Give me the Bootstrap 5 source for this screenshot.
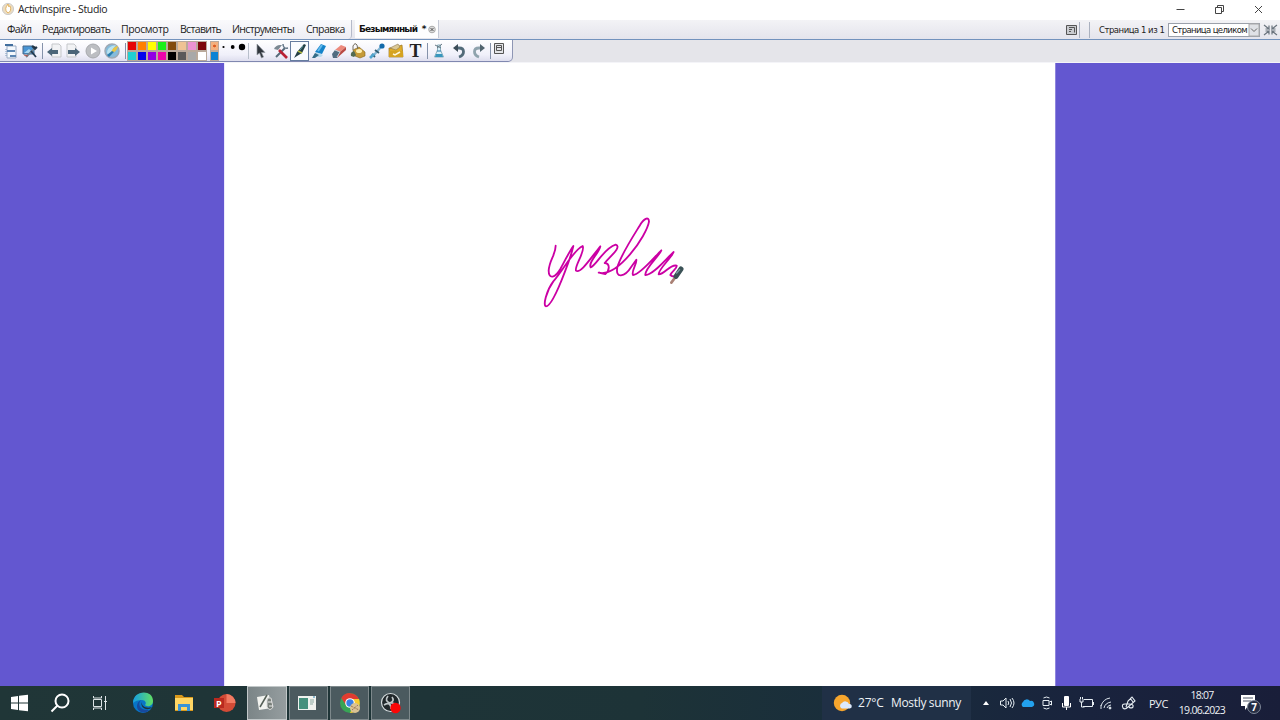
<!DOCTYPE html>
<html lang="ru">
<head>
<meta charset="utf-8">
<title>ActivInspire - Studio</title>
<link href="https://cdn.jsdelivr.net/npm/bootstrap@5.3.0/dist/css/bootstrap.min.css" rel="stylesheet">
<style>
body{width:1280px;height:720px;overflow:hidden;font-family:"Open Sans","Noto Sans",sans-serif;font-size:10.5px;line-height:1;color:#222}
svg{display:block;flex:none;overflow:visible}
.titlebar{height:20px;background:#fff}
.titlebar .t{letter-spacing:-.38px;padding-bottom:1px}
.menurow{height:19px;background:linear-gradient(#f3f3f6,#e4e4ec)}
.menupane{width:352px;background:linear-gradient(#fafafc,#ededf4);border-right:1px solid #b5bac9;border-radius:0 0 4px 0;letter-spacing:-.66px}
.menupane span,.t{white-space:nowrap;flex:none}
.doctab{width:84px;height:18px;margin-left:3px;background:#fdfdfe;border-right:1px solid #c4c8d4;font:bold 9px "DejaVu Sans",sans-serif;color:#111;letter-spacing:-.7px}
.toolrow{height:24px;background:#e5e5ea;border-top:1px solid #7292bd;border-bottom:1px solid #f4f4f8}
.toolpane{width:513px;height:22px;background:linear-gradient(#fff,#f0f0fa 70%,#dedeee);border-right:1px solid #8e96b4;border-bottom:1px solid #8088b0;border-radius:0 0 5px 0}
.cell{flex:none;display:flex;justify-content:center;align-items:center;height:21px}
.sep{flex:none;width:1px;height:16px;background:#8592aa}
.palette{display:grid;grid-template-columns:repeat(8,10px);grid-auto-rows:10px;width:80px}
.palette i,.swatch{border:1px solid #b9a99b;width:10px;height:10px;display:block}
.swatch{width:9px}
.pagelabel{font:8.5px "DejaVu Sans",sans-serif;letter-spacing:-.48px;width:69px}
.zoombox{width:92px;height:14px;background:#fff;border:1px solid #9ba0aa;padding-left:3px;font:8.5px "DejaVu Sans",sans-serif;letter-spacing:-.62px}
.workspace{height:623px;background:#6357d0}
.sheet{width:832px;margin-left:224px;background:#fff;border-left:1px solid #ebe9ff;border-right:1px solid #8f86dd}
.ink{position:absolute;left:305px;top:142px}
.taskbar{height:34px;background:linear-gradient(90deg,#203637,#1d3337 50%,#192d3c 68%,#19233d 85%,#191e39);color:#eef2f5}
.task{width:39px;height:34px;background:#4b5a5f;border:1px solid #7d888b;flex:none}
.task.current{background:linear-gradient(90deg,#7b8587,#959d9f);border-color:#c2c8c9;width:40px}
.weather{width:149px;height:34px;background:#203046;font-size:12px}
.clock{font-size:10.5px;line-height:15px;width:60px;letter-spacing:-.72px}
</style>
</head>
<body class="d-flex flex-column bg-white">
<header class="titlebar d-flex align-items-center flex-shrink-0">
  <svg width="18" height="20"><circle cx="8" cy="9" r="5.600" fill="#ecdcc0" stroke="#ccc"/><path d="M7 12Q4 9 8 4Q8 8 10 6Q12 11 8 13Z" fill="#fff" stroke="#dda747" stroke-width=".8"/></svg>
  <span class="t">ActivInspire - Studio</span>
  <svg class="ms-auto" width="106" height="20" fill="none" stroke="#444"><path d="M2.500 9.500h8M41.500 7.500h6v6h-6zM43.500 7v-1.500h6v6h-2M81 6l7 7M88 6l-7 7"/></svg>
</header>

<nav class="menurow d-flex flex-shrink-0">
  <div class="menupane d-flex align-items-center flex-shrink-0">
    <span style="width:35px;margin-left:7px">Файл</span><span style="width:79px">Редактировать</span><span style="width:59px;letter-spacing:-.4px">Просмотр</span><span style="width:52px">Вставить</span><span style="width:74px">Инструменты</span><span style="letter-spacing:-.55px">Справка</span>
  </div>
  <div class="doctab d-flex align-items-center" style="padding-left:4px"><span class="t" style="width:68px;letter-spacing:-.82px">Безымянный&nbsp; *</span>
    <svg width="9" height="9"><circle cx="5" cy="4.500" r="3.300" fill="#ddd" stroke="#aaa"/><path d="M3.500 3l3 3M6.500 3l-3 3" stroke="#555"/></svg></div>
  <div class="d-flex align-items-center ms-auto">
    <svg width="12" height="12" fill="none" stroke="#555"><path fill="#c9cbcf" d="M.5 1.500h10v9H.5z"/><path d="M3 3.500h5.500v5M3 5.500h3M3 7.500h2"/></svg>
    <i class="sep" style="margin-left:1px;background:#aab1bf"></i><i class="sep" style="margin:0 9px;background:#aab1bf"></i>
    <span class="t pagelabel">Страница 1 из 1</span>
    <div class="zoombox d-flex align-items-center justify-content-between"><span class="t">Страница целиком</span>
      <svg width="10" height="12"><path d="M0 0h10v12H0z" fill="#dfe1e6" stroke="#aaa"/><path d="M2 4.500l3 3 3-3" fill="none" stroke="#666"/></svg></div>
    <svg style="margin-left:4px;margin-right:2px" width="14" height="14" fill="none" stroke="#69737d" stroke-width="1.200"><path d="M0 2l5 4V2.500M5 6H1.500M13 2L8 6V2.500M8 6h3.500M0 12l5-4v3.500M5 8H1.500M13 12L8 8v3.500M8 8h3.500"/></svg>
  </div>
</nav>

<div class="toolrow flex-shrink-0">
 <div class="toolpane d-flex align-items-center">
  <div class="cell" style="width:21px"><svg width="16" height="16"><path d="M4 3h9v12H4z" fill="#f4f8fd" stroke="#9aabc3"/><path d="M2 1h8v2H2z" fill="#426f9e"/><path d="M4 7h8v2H4zM7 12h6v2H7z" fill="#5c85b3"/><path d="M3 6v8" stroke="#7996ba" stroke-dasharray="1"/></svg></div>
  <div class="cell" style="width:18px"><svg width="16" height="16"><path d="M1 3h11v8H1z" fill="#4995d4" stroke="#47698a"/><path d="M2 10l5-4 4 4" fill="#a9d8f3"/><path d="M4 14l9-9" stroke="#718391" stroke-width="2"/><path d="M9 8l5 6M10 3l3 3 2-2" stroke="#24394d" stroke-width="1.800"/><path d="M2 12l4 1" stroke="#b65246"/></svg></div>
  <i class="sep" style="margin:0 2px 0 3px"></i>
  <div class="cell" style="width:18px"><svg width="16" height="16"><path d="M6 1h7l2 2v11H6z" fill="#f1f2f4" stroke="#c5c7ca"/><path d="M1 9l5-4v2h6v4H6v2z" fill="#4b6578"/></svg></div>
  <div class="cell" style="width:20px"><svg width="16" height="16"><path d="M2 1h7l2 2v11H2z" fill="#f1f2f4" stroke="#c5c7ca"/><path d="M15 9l-5-4v2H3v4h7v2z" fill="#4b6578"/></svg></div>
  <div class="cell" style="width:19px"><svg width="16" height="16"><circle cx="8" cy="8" r="7" fill="#bcbec2" stroke="#a7a9ad"/><path d="M6 4.500l6 3.500-6 3.500z" fill="#fff"/></svg></div>
  <div class="cell" style="width:19px"><svg width="16" height="16"><circle cx="8" cy="8" r="7" fill="#84bbdb" stroke="#9ea9b4" stroke-width="1.500"/><path d="M3 10Q3 5 8 3l4-1-3 4 2 2-6 5z" fill="#b9e2f0"/><path d="M7 10Q8 4 14 3Q13 9 7 10Z" fill="#eac646"/><path d="M3 12l5-4 2 1-5 5z" fill="#287daf"/></svg></div>
  <i class="sep" style="margin:0 0 0 4px"></i>
  <div class="palette" style="margin-left:.5px">
   <i style="background:#e60404"></i><i style="background:#ff8000"></i><i style="background:#ffff00"></i><i style="background:#19ee19"></i><i style="background:#824b0d"></i><i style="background:#efc394"></i><i style="background:#eb93d2"></i><i style="background:#7d070c"></i>
   <i style="background:#20d0d2"></i><i style="background:#0404eb"></i><i style="background:#9100e5"></i><i style="background:#ed04ab"></i><i style="background:#000"></i><i style="background:#5a5a5a"></i><i style="background:#a9a9a9"></i><i style="background:#fff"></i>
  </div>
  <div style="margin-left:3px"><i class="swatch" style="background:radial-gradient(circle,#dd5a20 20%,#f4b07e 32%)"></i><i class="swatch" style="background:#0a82d4"></i></div>
  <svg width="30" height="20"><circle cx="4.500" cy="6" r="1.100"/><circle cx="13.700" cy="6" r="1.900"/><circle cx="23" cy="6" r="3.200"/></svg>
  <i class="sep" style="margin-right:1px;background:#b8bfcb;margin-left:-.5px"></i>
  <div class="cell" style="width:22px"><svg width="16" height="16"><path d="M4 1v11l2.500-2 2 5 2-1-2-4.500H12z" fill="#30363d" stroke="#9298a0" stroke-width=".7"/></svg></div>
  <div class="cell" style="width:18px"><svg width="16" height="16" fill="none"><path d="M3 14L12 5" stroke="#576b7b" stroke-width="2"/><path d="M10 1q0 5 5 4" stroke="#66798a" stroke-width="1.500"/><path d="M6 7l8 8" stroke="#b92235" stroke-width="2.600"/><path d="M1 6q2-4 6-4h2L5 7z" fill="#7c8993"/></svg></div>
  <div class="cell" style="width:19px;height:20px;background:#fafbff;border:1px solid #667ca0"><svg width="16" height="16"><path d="M2 15L5 9 12 1l2 1-4 8-5 3z" fill="#253f45"/><path d="M6 8l4 2" stroke="#b2ba42" stroke-width="1.500"/><path d="M8 7l3-4" stroke="#5c98a1"/></svg></div>
  <div class="cell" style="width:20px"><svg width="16" height="16"><path d="M2 14l3-5 7 3-2 2z" fill="#b9dbee"/><path d="M4 9l6-8 5 2-4 8z" fill="#1583c9"/><path d="M7 8l4-6" stroke="#67bbec" stroke-width="2"/><path d="M1 15l3-5 4 2-4 3z" fill="#356c87"/></svg></div>
  <div class="cell" style="width:19px"><svg width="16" height="16"><path d="M1 11l3-4 5 2-3 6H2z" fill="#526c81"/><path d="M4 7l6-5 5 2-6 5z" fill="#ed8a7d"/><path d="M9 9l6-5v3l-9 8z" fill="#b94a43"/><path d="M4 7l5 2-3 5" fill="none" stroke="#c3d0d8"/></svg></div>
  <div class="cell" style="width:19px"><svg width="16" height="16"><path d="M3 7l6-3 6 5v4l-5 2-5-2z" fill="#c59a38" stroke="#856319" stroke-width=".6"/><path d="M3 7V3q2-4 4-1l1 5" fill="none" stroke="#746e60"/><ellipse cx="9" cy="8" rx="3" ry="2" fill="#fff0af"/><path d="M4 8q-4 1-3 5l3 1 2-2z" fill="#536b51"/></svg></div>
  <div class="cell" style="width:19px"><svg width="16" height="16"><path d="M4 13L12 4" stroke="#82b5d4" stroke-width="2.300"/><circle cx="13" cy="3" r="2.600" fill="#126aaa"/><path d="M6 7l4 3M3 11l3 3" stroke="#335f74" stroke-width="1.800"/><path d="M1 15l4-4" stroke="#4fa4ce" stroke-width="2.600"/></svg></div>
  <div class="cell" style="width:20px"><svg width="16" height="16"><path d="M1 5h4l9-3 1 12H1z" fill="#e0ad28" stroke="#9b7420" stroke-width=".7"/><path d="M2 5l8-4 2 3-4 3z" fill="#dbc894" stroke="#8c7752" stroke-width=".6"/><path d="M1 8h14v6H1z" fill="#d5a321"/><path d="M5 11l2 1 5-3" fill="none" stroke="#fff8dc" stroke-width="1.500"/></svg></div>
  <div class="cell" style="width:19px;font:bold 18px 'Liberation Serif',serif;color:#222;padding-top:1px">T</div>
  <i class="sep" style="margin:0 1px 0 2px"></i>
  <div class="cell" style="width:20px"><svg width="14" height="16"><path d="M5.500 2h3v5l3 7h-9l3-7z" fill="#d8f0fa" stroke="#8badbb"/><path d="M4 11h6l1 3H3z" fill="#3896bd"/><path d="M3 2l6 3M10 1L5 5" stroke="#657984"/><path d="M5 8h4" stroke="#297dac"/></svg></div>
  <div class="cell" style="width:19px"><svg width="16" height="16"><path d="M5 5h3c6 0 6 7 0 9" fill="none" stroke="#526b79" stroke-width="2.800"/><path d="M2 5l5-4v8z" fill="#3c4d58"/></svg></div>
  <div class="cell" style="width:21px"><svg width="16" height="16"><path d="M11 5H8c-6 0-6 7 0 9" fill="none" stroke="#8fa3ad" stroke-width="2.800"/><path d="M14 5L9 1v8z" fill="#52656f"/></svg></div>
  <i class="sep" style="margin:0 2px 0 1px"></i>
  <svg width="12" height="18" fill="none" stroke="#555"><path d="M1.500 1.500h9v10h-9z" fill="#e3e4e8"/><path d="M3.500 3.500h5v5h-5zM4 5.500h4"/></svg>
 </div>
</div>

<main class="workspace flex-shrink-0 d-flex">
 <div class="sheet position-relative">
  <svg class="ink" width="170" height="115" viewBox="0 0 510 345" fill="none" stroke="#cb00a4" stroke-width="5.500" stroke-linecap="round" stroke-linejoin="round">
   <path d="M77 122C77 150 58 165 56 197C56 225 76 218 91 192C105 166 118 140 130 123C124 150 115 174 104 202C91 236 63 304 48 304C38 303 49 257 70 229C97 200 130 135 158 123C167 137 132 186 138 197C151 208 183 158 211 124C207 146 174 170 182 187C199 182 221 130 257 119C276 125 243 152 224 174C242 176 238 198 226 207L206 203C264 217 350 92 357 50C356 32 341 42 329 62C308 96 271 153 262 187C255 222 284 217 304 185L319 164C321 178 303 198 309 210C329 211 374 155 394 136C387 154 343 192 346 210C369 211 407 162 431 141C424 159 384 194 386 208C403 209 421 176 440 182C443 190 424 199 421 210C427 216 434 215 440 213"/>
   <path d="M424 233l17-23" stroke="#aa8175" stroke-width="8"/><path d="M438 214l15-22" stroke="#3b5256" stroke-width="15"/><path d="M440 204l9-10" stroke="#7b9da4" stroke-width="4"/>
  </svg>
 </div>
</main>

<footer class="taskbar flex-shrink-0 d-flex align-items-center">
  <div class="cell" style="width:38px"><svg width="18" height="18" fill="#fff"><path d="M1 3l7-1v6.500H1zM9 1.800L18 .8v7.700H9zM1 9.500h7V16l-7-1zM9 9.500h9v7.700l-9-1z"/></svg></div>
  <div class="cell" style="width:43px"><svg width="20" height="20" fill="none" stroke="#fff" stroke-width="2"><circle cx="12" cy="8" r="6.500"/><path d="M7.500 12.500L1.500 18.500"/></svg></div>
  <div class="cell" style="width:37px"><svg width="16" height="16" fill="none" stroke="#dce3e5"><path d="M1.500 4.500h8v7h-8zM1.500 1v2h8V1M1.500 15v-2h8v2M13.500 1v14M12 6.500h3"/></svg></div>
  <div class="cell" style="width:50px"><svg width="22" height="22"><defs><linearGradient id="edge"><stop stop-color="#159ee4"/><stop offset="1" stop-color="#61df63"/></linearGradient></defs><circle cx="11" cy="11" r="10" fill="#0875c7"/><path d="M1 11C1-2 21-3 21 9c0 6-7 6-8 4 2-2 0-5-3-5-4 0-7 1-9 3z" fill="url(#edge)"/><path d="M9 8c-4 4-1 11 8 10-4 5-12 2-12-4 0-3 2-5 4-6z" fill="#17499d"/><path d="M10 10c-1 4 4 7 10 5-1 1-2 2-3 2-5 1-9-3-7-7z" fill="#1d3337"/></svg></div>
  <div class="cell" style="width:32px"><svg width="20" height="20"><path d="M1 2h7l2 2h9v14H1z" fill="#d9991c"/><path d="M1 5h18v12H1z" fill="#ffd664"/><path d="M4 11h12v7h-3v-4H7v4H4z" fill="#3994d7"/></svg></div>
  <div class="cell" style="width:47px"><svg width="22" height="20" style="margin-left:2px"><circle cx="12.500" cy="10" r="9" fill="#d34b36"/><path d="M12.500 1a9 9 0 0 1 9 9h-9z" fill="#f27b62"/><path d="M0 5h10v10H0z" fill="#b9291f"/><text x="2" y="13.500" font-size="9" font-weight="bold" fill="#fff">P</text></svg></div>
  <div class="task current d-flex align-items-center justify-content-center"><svg width="20" height="20" style="margin-right:3px"><path d="M1 4l12-2 3 13-13 2z" fill="#f2f3ef"/><path d="M4 14l7-12" stroke="#555f57" stroke-width="1.500"/><path d="M11 14V7q0-3 4-2l2 9q-3 5-6 0z" fill="#777e78" stroke="#ddd"/><path d="M12 9h4M13 13h4" stroke="#eee"/></svg></div>
  <div class="task d-flex align-items-center justify-content-center" style="margin-left:2px"><svg width="18" height="16" style="margin-right:3px"><path d="M0 1h18v14H0z" fill="#f0f2ef"/><path d="M1 3h9v11H1z" fill="#46907d"/><path d="M12 5h4M12 7h4M12 9h3" stroke="#8ba8a1"/><path d="M15 2h2" stroke="#2c86b4"/></svg></div>
  <div class="task d-flex align-items-center justify-content-center" style="margin-left:2px"><svg width="22" height="22"><circle cx="11" cy="11" r="10" fill="#38a456"/><path d="M2.300 6A10 10 0 0 1 20 7h-9l-4 6z" fill="#e03b31"/><path d="M20 7a10 10 0 0 1-9 14l4-9-4-5z" fill="#f7cb2e"/><circle cx="11" cy="11" r="4.800" fill="#fff"/><circle cx="11" cy="11" r="3.700" fill="#397fe5"/><circle cx="16" cy="16" r="5" fill="#dac393"/><path d="M12 14l8 4M13 18l6-5" stroke="#9b7759" stroke-dasharray="2 1"/></svg></div>
  <div class="task d-flex align-items-center justify-content-center" style="margin-left:2px"><svg width="22" height="22"><circle cx="10.500" cy="10.500" r="9" fill="#20272a" stroke="#d7dddf" stroke-width="1.200"/><path d="M8 4q-4 5 2 7 5-2 2-6M4 13q7-4 7 4M11 11q7 0 4 5" fill="none" stroke="#bfc6c8" stroke-width="1.700"/><circle cx="15.500" cy="16" r="5.200" fill="#fb0606"/></svg></div>

  <div class="weather ms-auto d-flex align-items-center" style="padding-left:11px"><svg width="20" height="20"><circle cx="9" cy="10" r="8.200" fill="#f6a52d"/><path d="M8 15a3 3 0 0 1 1-5 4 4 0 0 1 7 1 2.300 2.300 0 0 1 1 4.500H9z" fill="#dce9fb"/></svg><span class="t" style="margin-left:5px;width:33px;letter-spacing:-.2px">27°C</span><span class="t" style="letter-spacing:-.33px">Mostly sunny</span></div>
  <div class="d-flex align-items-center flex-shrink-0" style="width:309px">
   <div class="cell" style="width:30px"><svg width="8" height="6"><path d="M1 5l3-4 3 4z" fill="#fff"/></svg></div>
   <div class="cell" style="width:12px"><svg width="16" height="14" fill="none" stroke="#e6edf2"><path d="M1.500 5v4H4l3 3V2L4 5zM9 5q1.500 2 0 4M11 3q3 4 0 8M13 2q4 5 0 10"/></svg></div>
   <div class="cell" style="width:28px"><svg width="14" height="10"><path d="M3 9a3 3 0 0 1 0-5 4 4 0 0 1 7-1 3 3 0 0 1 2 6z" fill="#23a1ed"/></svg></div>
   <div class="cell" style="width:12px"><svg width="12" height="14" fill="none" stroke="#e6edf2"><path d="M2 4.500h6v5H2zM8.500 6l2-1v4l-2-1M2.500 2q3-2 6 0M2.500 12q3 2 6 0"/></svg></div>
   <div class="cell" style="width:27px"><svg width="10" height="14"><rect x="2" y="0" width="5" height="10" rx="1" fill="#fff"/><path d="M.5 7v4h8V7M4.500 11v3" fill="none" stroke="#fff"/></svg></div>
   <div class="cell" style="width:12px"><svg width="15" height="12" fill="none" stroke="#e6edf2"><path d="M5 2.500h8.500v7H4M14.500 5v3M1 2v3h3V2M2.500 5v5h3M1.500 0v2M3.500 0v2"/></svg></div>
   <div class="cell" style="width:28px"><svg width="14" height="14" fill="none" stroke="#dbe4eb"><path d="M2 10Q4 3 11 2M5 12q1-5 7-6M8 12q1-3 4-3M2 13V9"/><circle cx="11" cy="12" r="1" fill="#fff"/></svg></div>
   <div class="cell" style="width:18px"><svg width="16" height="16" fill="none" stroke="#e6edf2" stroke-width="1.100"><path d="M5 12l2-6 4-4 3 4-7 6q-3 3-5 1-2-4 2-4h4q5 0 4 3-2 2-4 0M9 3l3 4"/></svg></div>
   <span class="t" style="margin-left:11px;width:28px;font-size:11px;letter-spacing:-.5px">РУС</span>
   <div class="clock text-center" style="margin-left:-5px"><div>18:07</div><div class="text-nowrap">19.06.2023</div></div>
   <svg width="25" height="24" style="margin-left:8px"><path d="M1 4h14v11H8l-3 4v-4H1z" fill="#fff"/><path d="M3 7h10M3 10h8" stroke="#4c5467"/><circle cx="14" cy="16" r="6.500" fill="#252d43" stroke="#7e8798"/><text x="11.300" y="20" font-size="10" font-weight="bold" fill="#fff">7</text></svg>
  </div>
</footer>
<script src="https://cdn.jsdelivr.net/npm/bootstrap@5.3.0/dist/js/bootstrap.bundle.min.js"></script>
</body>
</html>
